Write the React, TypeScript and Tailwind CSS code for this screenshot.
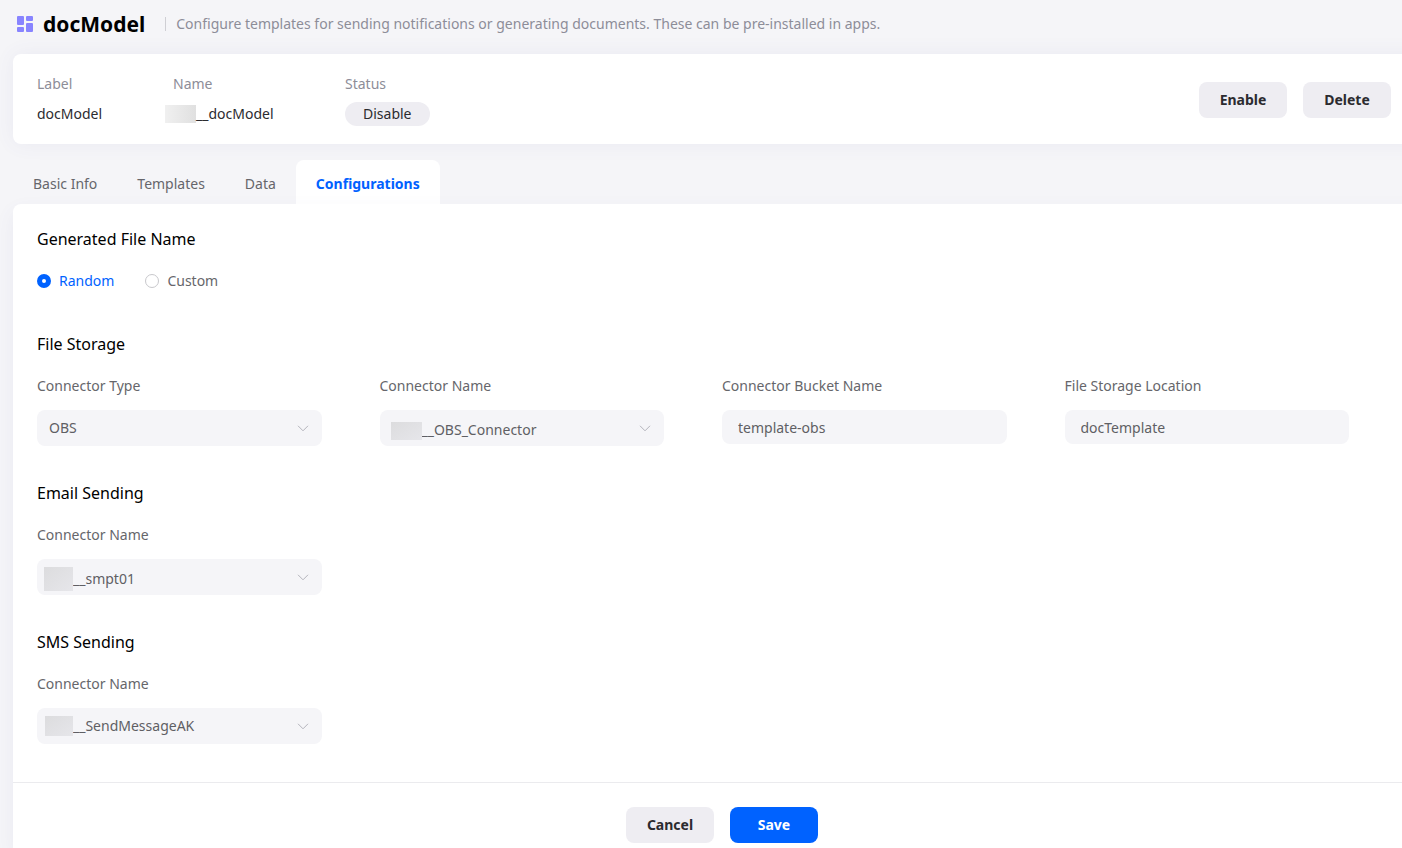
import { useState } from "react";
import clsx from "clsx";

const TABS = ["Basic Info", "Templates", "Data", "Configurations"];

function LogoIcon() {
  return (
    <svg width="16" height="16" viewBox="0 0 16 16" fill="#8884ff" aria-hidden="true">
      <rect x="0" y="0" width="7" height="9" rx="1" />
      <rect x="9" y="0" width="7" height="5" rx="1" />
      <rect x="0" y="11" width="7" height="5" rx="1" />
      <rect x="9" y="7" width="7" height="9" rx="1" />
    </svg>
  );
}

function Chevron() {
  return (
    <svg
      className="pointer-events-none absolute right-[13px] top-3 text-[#b4b4bc]"
      width="12"
      height="12"
      viewBox="0 0 12 12"
      fill="none"
      stroke="currentColor"
      aria-hidden="true"
    >
      <path d="M1 3.8 6 8.8 11 3.8" />
    </svg>
  );
}

interface ButtonProps {
  children: string;
  primary?: boolean;
}

function Button({ children, primary }: ButtonProps) {
  return (
    <button
      type="button"
      className={clsx(
        "h-9 w-[88px] rounded-lg text-sm font-bold",
        primary ? "bg-[#0062ff] text-white" : "bg-[#eeedf2] text-[#2b2b2f]",
      )}
    >
      {children}
    </button>
  );
}

interface SelectFieldProps {
  id: string;
  label: string;
  value: string;
  pad?: string;
  mask?: string;
}

function SelectField({ id, label, value, pad = "pl-3", mask }: SelectFieldProps) {
  return (
    <div className="pr-[58px]">
      <label htmlFor={id} className="block leading-5 text-[#66666b]">{label}</label>
      <div className="relative mt-3.5">
        <select id={id} className={clsx("block h-9 w-full appearance-none rounded-lg bg-[#f5f5f8] pr-9 text-[#5f5f64]", pad)}>
          <option>{value}</option>
        </select>
        {mask && <span className={clsx("pointer-events-none absolute bg-linear-to-br from-[#dcdcde] to-[#e6e6ea]", mask)} />}
        <Chevron />
      </div>
    </div>
  );
}

function TextField({ id, label, value }: { id: string; label: string; value: string }) {
  return (
    <div className="pr-[58px]">
      <label htmlFor={id} className="block leading-5 text-[#66666b]">{label}</label>
      <input id={id} type="text" defaultValue={value} className="mt-3.5 block h-[34px] w-full rounded-lg bg-[#f5f5f8] px-4 text-[#5f5f64]" />
    </div>
  );
}

function SectionTitle({ children }: { children: string }) {
  return <h2 className="text-base leading-6 text-black">{children}</h2>;
}

function FileNameOptions() {
  const [mode, setMode] = useState("Random");
  return (
    <div className="mt-5 flex gap-[31px]">
      {["Random", "Custom"].map((m) => (
        <label key={m} className={clsx("flex items-center gap-2 leading-5", mode === m ? "text-[#0062ff]" : "text-[#66666b]")}>
          <input
            type="radio"
            name="fileName"
            checked={mode === m}
            onChange={() => setMode(m)}
            className="size-3.5 appearance-none rounded-full border border-[#c8c8cc] bg-white checked:border-5 checked:border-[#0062ff]"
          />
          {m}
        </label>
      ))}
    </div>
  );
}

export default function App() {
  const [tab, setTab] = useState("Configurations");

  return (
    <div className="min-h-screen overflow-hidden bg-[#f5f5f8] font-['Noto_Sans','Open_Sans',sans-serif] text-sm">
      <div className="-mr-[29px] flex min-h-screen flex-col pl-[13px]">
        <header className="flex h-[54px] items-center pb-1.5 pl-1">
          <LogoIcon />
          <h1 className="ml-2.5 text-[21px] font-bold text-black">docModel</h1>
          <span className="ml-5 h-3.5 w-px bg-[#cfcfd4]" />
          <p className="ml-2.5 text-[#8d8d98]">
            Configure templates for sending notifications or generating documents. These can be pre-installed in apps.
          </p>
        </header>

        <section className="flex h-[90px] items-center justify-between rounded-lg bg-white pl-6 pr-10 pt-0.5 shadow-[0_0_20px_rgba(90,80,150,0.07)]">
          <dl className="flex leading-5">
            <div className="w-32">
              <dt className="text-[#8d8d98]">Label</dt>
              <dd className="mt-2 flex h-6 items-center text-[#2b2b2f]">docModel</dd>
            </div>
            <div className="w-[180px]">
              <dt className="pl-2 text-[#8d8d98]">Name</dt>
              <dd className="mt-2 flex h-6 items-center text-[#2b2b2f]">
                <span className="h-[18px] w-[31px] bg-linear-to-r from-[#f0f0f0] to-[#e0e0e0]" />
                __docModel
              </dd>
            </div>
            <div>
              <dt className="text-[#8d8d98]">Status</dt>
              <dd className="mt-2 flex h-6 items-center rounded-full bg-[#eeedf2] px-[18px] text-[#2b2b2f]">Disable</dd>
            </div>
          </dl>
          <div className="flex gap-4">
            <Button>Enable</Button>
            <Button>Delete</Button>
          </div>
        </section>

        <nav className="mt-4 flex h-11" role="tablist">
          {TABS.map((t) => (
            <button
              key={t}
              type="button"
              role="tab"
              aria-selected={tab === t}
              onClick={() => setTab(t)}
              className={clsx(
                "rounded-t-lg px-5 pt-1",
                tab === t ? "bg-white font-bold text-[#0062ff]" : "text-[#66666b]",
              )}
            >
              {t}
            </button>
          ))}
        </nav>

        <main className="flex-1 rounded-tl-lg bg-white shadow-[0_8px_20px_rgba(90,80,150,0.07)]">
          <form>
            <div className="px-6 pb-[38px] pt-[23px]">
              <section>
                <SectionTitle>Generated File Name</SectionTitle>
                <FileNameOptions />
              </section>

              <section className="mt-[41px]">
                <SectionTitle>File Storage</SectionTitle>
                <div className="mt-5 grid grid-cols-4">
                  <SelectField id="storageType" label="Connector Type" value="OBS" />
                  <SelectField
                    id="storageConnector"
                    label="Connector Name"
                    value="__OBS_Connector"
                    pad="pl-[42px] pt-1"
                    mask="left-[11px] top-3 h-[18px] w-[31px]"
                  />
                  <TextField id="bucket" label="Connector Bucket Name" value="template-obs" />
                  <TextField id="location" label="File Storage Location" value="docTemplate" />
                </div>
              </section>

              <section className="mt-[35px]">
                <SectionTitle>Email Sending</SectionTitle>
                <div className="mt-5 grid grid-cols-4">
                  <SelectField id="emailConnector" label="Connector Name" value="__smpt01" pad="pl-9 pt-1" mask="left-[7px] top-2 h-6 w-[29px]" />
                </div>
              </section>

              <section className="mt-[35px]">
                <SectionTitle>SMS Sending</SectionTitle>
                <div className="mt-5 grid grid-cols-4">
                  <SelectField id="smsConnector" label="Connector Name" value="__SendMessageAK" pad="pl-9" mask="left-2 top-2 h-5 w-7" />
                </div>
              </section>
            </div>

            <div className="flex justify-center gap-4 border-t border-[#ebebee] pb-1 pt-6">
              <Button>Cancel</Button>
              <Button primary>Save</Button>
            </div>
          </form>
        </main>
      </div>
    </div>
  );
}
